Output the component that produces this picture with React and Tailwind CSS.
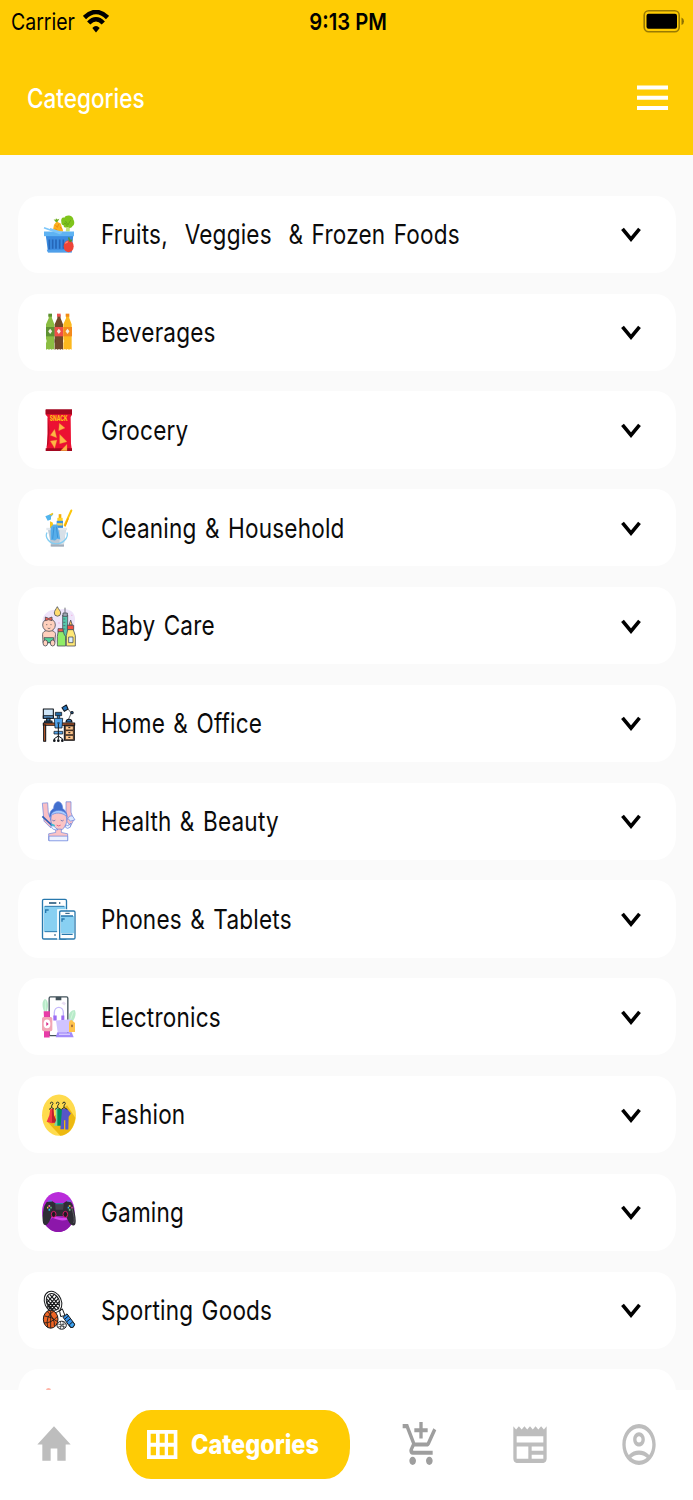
import { MdHome, MdAddShoppingCart, MdNewspaper, MdOutlineAccountCircle } from 'react-icons/md';

function Basket() {
    return (
        <svg viewBox="93 70.5 105 126" className="w-[35px] h-[42px] shrink-0">
            <path d="M128 126l4-20 8-10 12 6 8 24z" fill="#fbb01f" />
            <path d="M136 108l6 4M146 104l-4 10M150 112l6 8M134 118l8 4" stroke="#ef8a12" strokeWidth="3" />
            <path d="M138 98l-7-8 6 1 1-5 4 4 6-2-5 9z" fill="#6fae22" />
            <path d="M167 126l3-20 10 2-1 18z" fill="#c3e27a" />
            <path d="M154 98c-2-9 3-16 9-13 5-12 27-7 27 5 5 8 3 18-3 20-2 6-10 7-13 2-7 5-14 1-13-5-5 0-7-4-7-9z" fill="#7fc41c" />
            <path d="M166 94l8 12 8-14M160 106l5-6 8 12" stroke="#5c9e14" strokeWidth="2" fill="none" />
            <path d="M107 134h83l-5 54h-71z" fill="#3b8be0" />
            <path d="M102 126h90v14h-90z" fill="#5fb3f3" />
            <path d="M102 115l50 18M120 118l36 12" stroke="#7cc6fa" strokeWidth="5" />
            <path d="M118 150v30M128 150v28M138 150v28M149 150v28M160 150v28" stroke="#2566b8" strokeWidth="5" />
            <path d="M110 181h76l-1 8h-71z" fill="#4f9fea" />
            <ellipse cx="176" cy="170" rx="15" ry="18" fill="#ee4438" />
            <path d="M166 162q4-6 8-4" stroke="#ff8b78" strokeWidth="4" fill="none" />
            <path d="M177 156l-3-12 4-1 2 7 8 1-6 7z" fill="#53922a" />
        </svg>
    );
}

function Bottle({ x, body, dark, cap, label }) {
    return (
        <g transform={`translate(${x} 0)`}>
            <path d="M9 376h9l1 10 7 18v76l-4-2-4 2-4-2-4 2-4-2-5 2v-76l8-18z" fill={body} />
            <path d="M8 372h11v9H8z" fill={cap} />
            <path d="M1 412h26v28H1z" fill={label} />
            <path d="M13.500 417l6 8-6 8-6-8z" fill="#f4eee2" />
            <path d="M1 447l3 7-3 7z" fill={dark} />
        </g>
    );
}

function Bottles() {
    return (
        <svg viewBox="93 364 105 126" className="w-[35px] h-[42px] shrink-0">
            <Bottle x={107} body="#8bbd42" dark="#d9ebbd" cap="#5d9031" label="#5e9132" />
            <Bottle x={133} body="#70492a" dark="#53341d" cap="#ef5350" label="#ef4f48" />
            <Bottle x={159} body="#fcb81e" dark="#fff0c2" cap="#f28a16" label="#f38a1d" />
        </svg>
    );
}

function Snack() {
    return (
        <svg viewBox="93 72 105 126" className="w-[35px] h-[42px] shrink-0">
            <path d="M107 75h79v14l-4 7 1 80 3 21h-78l4-21 1-80-6-7z" fill="#ec1032" />
            <path d="M107 73h79v15h-79zM107 190h79v8h-79z" fill="#a30720" />
            <path d="M113 94l5 40-3 44-5 8 4-40z" fill="#b90a26" />
            <text x="146" y="109" textAnchor="middle" textLength="53" lengthAdjust="spacingAndGlyphs" fontSize="21" fontWeight="800" fontFamily="Inter, sans-serif" fill="#ffc114">SNACK</text>
            <g fill="#ffb545" stroke="#e08a2a" strokeWidth="1">
                <path d="M148 115l17 14-19 8z" />
                <path d="M134 133l6 25-19-7z" />
                <path d="M149 148l22 22-22 6z" />
                <path d="M121 168l20-3-7 25z" />
                <path d="M171 178v19h-19z" />
            </g>
        </svg>
    );
}

function Cleaning() {
    return (
        <svg viewBox="93 365.5 105 126" className="w-[35px] h-[42px] shrink-0">
            <path d="M184 376l-20 44" stroke="#fbc60b" strokeWidth="6" strokeLinecap="round" />
            <path d="M175 399l-10 25" stroke="#f7a600" strokeWidth="4" />
            <path d="M106 393l13-5 8-3 3 3-7 7v8l-10 4z" fill="#52b5ed" />
            <path d="M118 388l10-5 2 3-6 6z" fill="#f5c81d" />
            <path d="M120 408l8 4 4 18h-12z" fill="#f8c51b" />
            <path d="M146 387h8v14h-8z" fill="#f6ae09" />
            <path d="M142 398h16v12h-16z" fill="#ffd429" />
            <path d="M140 407h19v23h-19z" fill="#3b91dd" />
            <path d="M141 414h17v7h-17z" fill="#f6d554" />
            <path d="M113 430h55l-7 54h-37z" fill="#bcc8d5" />
            <path d="M150 432h17l-6 52h-13z" fill="#d7e0e8" />
            <path d="M109 428h62v7h-62z" fill="#e1e7ed" />
            <path d="M122 426l8-8h12l9 45-9-2-7 5-13-2z" fill="#57aeea" />
            <path d="M132 425l-4 36M139 424l4 34" stroke="#2f86ce" strokeWidth="2" />
            <path d="M111 442c-8 15 8 34 27 34s39-18 33-34" stroke="#83cdf2" strokeWidth="4" fill="none" />
            <path d="M122 478h40v6h-40z" fill="#a3aebb" />
        </svg>
    );
}

function Baby() {
    return (
        <svg viewBox="93 74 105 126" className="w-[35px] h-[42px] shrink-0">
            <path d="M98 130c-5-30 25-47 46-40 25-12 58 2 50 36l-6 60h-80z" fill="#eee4fa" />
            <g stroke="#494d55" strokeWidth="2.400" strokeLinejoin="round">
                <path d="M142 79c-5 9-9 13-9 19a9 9 0 0 0 19 0c0-6-6-10-10-19z" fill="#ffdc72" />
                <path d="M98 167c-2-12 6-17 19-17s22 5 19 17l-2 20H99z" fill="#ffd0bd" />
                <path d="M102 172h29l-2 15h-24z" fill="#4fd39a" />
                <ellipse cx="106" cy="188" rx="7" ry="9" fill="#ffd0bd" />
                <ellipse cx="128" cy="188" rx="7" ry="9" fill="#ffd0bd" />
                <ellipse cx="117" cy="134" rx="19" ry="19" fill="#ffd0bd" />
                <path d="M106 110l10 4 10-4v11l-10-3-10 3z" fill="#f45b50" />
                <path d="M165 82v22" fill="none" />
                <path d="M158 104h15v74h-15z" fill="#55c8ad" />
                <path d="M159 98h13v10h-13z" fill="#9fa8b4" />
                <path d="M145 151h15l2 10 5 8v28h-25v-28z" fill="#8fec67" />
                <path d="M144 145h15v9h-15z" fill="#f4594a" />
                <path d="M177 134l5-15 5 15z" fill="#ffc15a" />
                <path d="M172 135h19v13h-19z" fill="#f65042" />
                <path d="M173 148h17l6 18v31h-27v-31z" fill="#ffe875" />
                <path d="M176 170h13v17h-13z" fill="#dcefff" />
            </g>
            <path d="M108 133h4M121 133h4M113 143q4 4 8 0M160 116h6M160 126h6M160 136h6M160 146h6" stroke="#494d55" strokeWidth="2" fill="none" />
            <path d="M147 126v4M184 105h3" stroke="#f5a0d4" strokeWidth="3" />
        </svg>
    );
}

function Office() {
    return (
        <svg viewBox="93 367 105 126" className="w-[35px] h-[42px] shrink-0">
            <g stroke="#10141a" strokeWidth="3.200" strokeLinejoin="round">
                <path d="M100 388h30v28h-30z" fill="#cfe6f8" />
                <path d="M100 408h30v8h-30z" fill="#5f9fd8" />
                <path d="M110 416h10v9h-10zM104 424h22v6h-22z" fill="#3776ab" />
                <path d="M184 400l-12-14M184 400l-9 20" fill="none" strokeWidth="2" />
                <path d="M156 384l13-8 5 12-11 7z" fill="#2474bd" />
                <circle cx="186" cy="399" r="3.500" fill="#2474bd" />
                <path d="M168 427q1-8 9-8t9 8z" fill="#2474bd" />
                <path d="M100 430h94v7h-94z" fill="#d5652c" />
                <path d="M101 436h6v49h-6z" fill="#d5652c" />
                <path d="M163 437h30v45h-30z" fill="#d77739" />
            </g>
            <g stroke="#10141a" strokeWidth="2.200" strokeLinejoin="round">
                <path d="M166 439h24v12h-24zM166 453h24v12h-24zM166 467h24v13h-24z" fill="#ffc58b" />
                <path d="M136 398h19v10h-19z" fill="#20659f" />
                <path d="M142 408h7v9h-7z" fill="#3682c2" />
                <path d="M133 416h25l-2 29h-21z" fill="#52a4ec" />
                <path d="M132 455h26v8h-26z" fill="#52a4ec" />
            </g>
            <path d="M145 432v47M145 469l-12 8v6M145 469l12 8v6" stroke="#10141a" strokeWidth="3" fill="none" />
            <path d="M175 444h6M175 459h6M175 473h6M142 430h7" stroke="#10141a" strokeWidth="3" />
            <g fill="#10141a">
                <circle cx="133" cy="483" r="4" />
                <circle cx="145" cy="483" r="4" />
                <circle cx="157" cy="483" r="4" />
            </g>
        </svg>
    );
}

function Beauty() {
    return (
        <svg viewBox="93 75.6 105 126" className="w-[35px] h-[42px] shrink-0">
            <path d="M113 101h13l-8 42 12 22h30l13-20-8-43h12" fill="#dce9ff" />
            <g stroke="#6381dc" strokeWidth="2" strokeLinejoin="round">
                <path d="M97 85l16-1 2 31 9 24-2 20-20-20z" fill="#f9bfc5" />
                <path d="M168 81h15v31l8 24-10 19-10-15-3-20z" fill="#f9bfc5" />
                <path d="M131 101c0-27 27-27 27 0 10 8 15 19 13 27l-52-2c-2-9 3-20 12-25z" fill="#416fce" />
                <path d="M124 118c5-14 37-16 45 0l3 16-51 1z" fill="#a8cdff" />
                <path d="M124 123c8-12 36-10 45 2 5 21-7 42-23 42-16 0-27-22-22-44z" fill="#fbc4c5" />
                <path d="M137 163h17v10l19 4v20h-57v-20l21-4z" fill="#fbc4c5" />
                <path d="M117 184h56v14h-56z" fill="#ecf2ff" />
                <path d="M97 125l29 27" stroke="#315eb7" strokeWidth="5" />
                <path d="M129 152l15 13q-16 2-20-9z" fill="#f1f7ff" />
                <path d="M174 131q3-10 13-8l8 12-14 4z" fill="#dce8ff" />
                <path d="M166 151q9 5 17-6l-2 12q-9 8-15 0z" fill="#e6eeff" />
            </g>
            <path d="M127 136q5 5 9 0M152 136q5 5 9 0" stroke="#495ca8" strokeWidth="2" fill="none" />
            <path d="M140 151q6 5 12 0" stroke="#e86583" strokeWidth="3" fill="none" />
            <path d="M124 148l10 5" stroke="#3abed0" strokeWidth="5" />
        </svg>
    );
}

function Phones() {
    return (
        <svg viewBox="93 369 105 126" className="w-[35px] h-[42px] shrink-0">
            <rect x="97.500" y="373" width="72" height="119" rx="4" fill="#fff" stroke="#2878ad" strokeWidth="4" />
            <path d="M101 394h66v76h-66z" fill="#88d0f2" />
            <path d="M104 394h59M104 470h40" stroke="#2878ad" strokeWidth="3" />
            <path d="M117 384h22M147 384h4M133 480h4" stroke="#174f76" strokeWidth="5" />
            <path d="M107 414v-9h9" stroke="#2878ad" strokeWidth="4" fill="none" />
            <path d="M144 494V405h29" stroke="#fff" strokeWidth="5" fill="none" />
            <rect x="149" y="408" width="46" height="84" rx="4" fill="#fff" stroke="#2878ad" strokeWidth="4" />
            <path d="M152 423h40v52h-40z" fill="#88d0f2" />
            <path d="M153 423h36M155 478h33" stroke="#2878ad" strokeWidth="4" />
            <path d="M166 415h13" stroke="#174f76" strokeWidth="3" />
            <path d="M156 440v-8h8" stroke="#2878ad" strokeWidth="4" fill="none" />
        </svg>
    );
}

function Electronics() {
    return (
        <svg viewBox="93 77.2 105 126" className="w-[35px] h-[42px] shrink-0">
            <path d="M102 123c-8-20-4-34 3-37 10 3 12 21 5 39zM178 150c-5-19 3-30 16-31 6 9 2 25-7 36z" fill="#b8eac9" />
            <path d="M106 91v33M190 124l-9 26" stroke="#e1fae6" strokeWidth="2" />
            <rect x="117.500" y="80" width="56" height="116" rx="4" fill="#fff" stroke="#43535b" strokeWidth="4" />
            <path d="M137 80h17v10h-17z" fill="#43535b" />
            <path d="M154 99l7-5 7 6-5 6z" fill="#eadff4" />
            <path d="M133 141v-14c0-21 27-21 27 0v14" stroke="#c5b9fc" strokeWidth="4" fill="none" />
            <path d="M130 136h10v15h-10zM154 136h9v15h-9z" fill="#9c6df4" />
            <path d="M138 151l45-4 4 39h-44z" fill="#d0c4ff" />
            <path d="M142 186h43l6 15h-54z" fill="#a28bfa" />
            <path d="M147 192h33" stroke="#d9ceff" strokeWidth="4" />
            <path d="M101 123h19l-1 20h-17zM102 181h17v21h-17z" fill="#e83ba7" />
            <rect x="96" y="140" width="31" height="43" rx="5" fill="#f2a6b6" />
            <ellipse cx="111" cy="161" rx="10" ry="13" fill="#fff" />
            <path d="M109 155l7 6-7 6z" fill="#d82282" />
            <path d="M177 160q0-10 8-11l10 9v27h-18z" fill="#ffc34c" />
            <ellipse cx="186" cy="167" rx="3" ry="4" fill="#a46d38" />
        </svg>
    );
}

function Fashion() {
    return (
        <svg viewBox="93 370.6 105 126" className="w-[35px] h-[42px] shrink-0">
            <ellipse cx="147" cy="434" rx="51" ry="62" fill="#ffdb4d" />
            <path d="M171 404l25 38c-4 31-20 52-45 54l-39-42z" fill="#edb911" />
            <path d="M121 415h9l2 20 9 21-16 2-15-4 8-20z" fill="#f23843" />
            <path d="M126 415h4l2 20 9 21h-15z" fill="#b9212d" />
            <path d="M137 415l8-3v54h-13l6-17z" fill="#7cd3a0" />
            <path d="M142 415h11l4 5v46h-15z" fill="#008f58" />
            <path d="M156 415h15l12 14-7 10-1 38h-9v-28h-4v27h-11l4-46z" fill="#5656c7" />
            <g stroke="#26302c" strokeWidth="3" fill="none">
                <path d="M121 400q0-5 4-5t4 4l-4 7v5l-8 6M125 411l7 5" />
                <path d="M139 400q0-5 4-5t4 4l-4 7v5l-8 6M143 411l8 5" />
                <path d="M158 400q0-5 4-5t4 4l-4 7v5l-8 6M162 411l10 6" />
            </g>
        </svg>
    );
}

function Gaming() {
    return (
        <svg viewBox="93 79 105 126" className="w-[35px] h-[42px] shrink-0">
            <ellipse cx="145" cy="142" rx="49" ry="60" fill="#b92bda" />
            <path d="M106 180l25-24 61 6c-10 29-29 40-47 40-16 0-29-8-39-22z" fill="#8c17aa" />
            <path d="M125 153q23 16 48 8" stroke="#d647ee" strokeWidth="7" fill="none" />
            <path d="M110 112l17-2 8 5h26l8-5 14 3 5 7c7 22 14 57 5 62-9 4-18-10-25-27h-43c-6 17-14 29-21 26-11-5-5-42-1-57z" fill="#2e2d35" />
            <path d="M135 115h27l-3 20h-22z" fill="#44434d" />
            <path d="M137 117h22M114 109h12M171 109h11" stroke="#12bce6" strokeWidth="2" />
            <path d="M186 132q10 33 5 43" stroke="#5b5a62" strokeWidth="3" fill="none" />
            <ellipse cx="131" cy="149" rx="7" ry="9" fill="#1c1b21" stroke="#f21670" strokeWidth="2.500" />
            <ellipse cx="166" cy="149" rx="7" ry="9" fill="#1c1b21" stroke="#f21670" strokeWidth="2.500" />
            <path d="M111 129h4M179 122v4" stroke="#f2c63c" strokeWidth="5" />
            <path d="M118 121v6M184 129h4" stroke="#f454ab" strokeWidth="5" />
            <path d="M118 132v6M173 129h4" stroke="#26b8e9" strokeWidth="5" />
            <path d="M121 129h4M179 132v6" stroke="#63cb83" strokeWidth="5" />
        </svg>
    );
}

function Sports() {
    return (
        <svg viewBox="93 372.4 105 126" className="w-[35px] h-[42px] shrink-0">
            <g stroke="#17191b" strokeWidth="3">
                <ellipse cx="129" cy="411" rx="25" ry="33" transform="rotate(-24 129 411)" fill="#fff" />
                <ellipse cx="129" cy="411" rx="19" ry="26" transform="rotate(-24 129 411)" fill="#fff" />
                <path d="M120 389l29 33M113 394l34 39M110 402l29 34M109 412l18 21M134 387l-24 27M141 393l-30 35M146 400l-31 35M149 409l-24 27" strokeWidth="3.500" />
                <path d="M149 439l8-7 8 20-13 3z" fill="#fff" />
                <path d="M159 457l12-10 21 28c4 8-7 17-13 10z" fill="#3490e8" />
                <path d="M165 462l11-9M171 470l11-9" />
                <path d="M178 480l10-9 6 7-4 9-8 1z" fill="#3da3f2" />
                <ellipse cx="122" cy="463" rx="22" ry="27" fill="#ee6424" />
                <path d="M103 453q22 2 39 17M111 439q25 22 22 45M132 438q-27 16-19 49M102 474q21 2 41-20M122 437v52" fill="none" strokeWidth="2.500" />
                <ellipse cx="155" cy="481" rx="14" ry="12" fill="#fff" />
                <path d="M143 477q11 7 25-1M143 487q12-7 24 0M151 471q5 10 0 21M160 470q-3 10 1 21" fill="none" strokeWidth="2" />
            </g>
        </svg>
    );
}

function Pets() {
    return (
        <svg viewBox="0 0 35 42" className="w-[35px] h-[42px] shrink-0">
            <ellipse cx="7.500" cy="3.500" rx="2.500" ry="2.500" fill="#ffb5a8" />
        </svg>
    );
}

const CATEGORIES = [
    { name: 'Fruits,  Veggies  & Frozen Foods', Icon: Basket },
    { name: 'Beverages', Icon: Bottles },
    { name: 'Grocery', Icon: Snack },
    { name: 'Cleaning & Household', Icon: Cleaning },
    { name: 'Baby Care', Icon: Baby },
    { name: 'Home & Office', Icon: Office },
    { name: 'Health & Beauty', Icon: Beauty },
    { name: 'Phones & Tablets', Icon: Phones },
    { name: 'Electronics', Icon: Electronics },
    { name: 'Fashion', Icon: Fashion },
    { name: 'Gaming', Icon: Gaming },
    { name: 'Sporting Goods', Icon: Sports },
    { name: '', Icon: Pets },
];

function StatusBar() {
    return (
        <div className="grid grid-cols-3 items-center h-[43px] pl-[11px] pr-[8px]">
            <div className="flex items-center">
                <span className="w-[72px] text-[23.5px] leading-none origin-left scale-x-[0.83] whitespace-pre">Carrier</span>
                <svg viewBox="0 0 26 23" className="w-[26px] h-[23px]">
                    <path d="M1.500 7.500Q13-3.500 24.500 7.500" fill="none" stroke="#000" strokeWidth="4.500" />
                    <path d="M5.700 13Q13 5.500 20.300 13" fill="none" stroke="#000" strokeWidth="4.500" />
                    <path d="M9.300 18Q13 14 16.700 18L13 22.500z" />
                </svg>
            </div>
            <span className="justify-self-center text-[23.5px] leading-none font-semibold scale-x-[0.86] whitespace-pre">9:13 PM</span>
            <svg viewBox="0 0 42 24" className="w-[42px] h-[24px] justify-self-end mb-[2px]">
                <rect x="1.200" y="1.800" width="35" height="21" rx="4.500" fill="none" stroke="#000" strokeOpacity=".4" strokeWidth="1.600" />
                <rect x="3.500" y="4.700" width="30.500" height="15" rx="2" />
                <path d="M38.500 8.500q2.500 1 2.500 3.700t-2.500 3.700z" fillOpacity=".45" />
            </svg>
        </div>
    );
}

function CategoryRow({ name, Icon }) {
    return (
        <div className="flex items-center shrink-0 h-[77.3px] pl-[23px] pr-[35px] bg-white rounded-[20px/24px]">
            <Icon />
            <span className="ml-[25px] pt-px text-[27.5px] leading-none tracking-[0.25px] [word-spacing:2.2px] text-[#0b0b0b] origin-left scale-x-[0.82] whitespace-pre">{name}</span>
            {name && (
                <svg viewBox="0 0 20 16" className="w-[20px] h-[16px] ml-auto mt-[2px] shrink-0">
                    <path d="M1.500 1.800L10 12.200l8.500-10.400" fill="none" stroke="#000" strokeWidth="3.600" />
                </svg>
            )}
        </div>
    );
}

export default function App() {
    return (
        <div className="flex flex-col w-[693px] h-[1500px] overflow-hidden bg-[#fafafa] font-[Inter,sans-serif]">
            <header className="h-[155px] shrink-0 bg-[#ffcc04]">
                <StatusBar />
                <div className="flex items-center justify-between h-[110px] pl-[27px] pr-[25px]">
                    <h1 className="text-[27px] leading-none font-medium text-white origin-left scale-x-[0.835] whitespace-pre">Categories</h1>
                    <svg viewBox="0 0 31 26" className="w-[31px] h-[26px]">
                        <path d="M0 .5h31v4H0zM0 10.800h31v4H0zM0 21h31v4H0z" fill="#fff" />
                    </svg>
                </div>
            </header>

            <main className="flex-1 min-h-0 overflow-hidden flex flex-col gap-[20.5px] pt-[40.800px] px-[17.500px]">
                {CATEGORIES.map((c, i) => <CategoryRow key={i} {...c} />)}
            </main>

            <nav className="flex items-center shrink-0 h-[110.500px] pl-[33.700px] bg-white text-[#bdbdbd]">
                <MdHome preserveAspectRatio="none" className="w-[40px] h-[49px]" />
                <div className="flex items-center w-[224px] h-[69px] ml-[52px] mr-[51.600px] pl-[21.500px] rounded-[25px/31px] bg-[#ffcc04] text-white">
                    <svg viewBox="0 0 91 87" preserveAspectRatio="none" className="w-[30.400px] h-[29px] shrink-0">
                        <path fillRule="evenodd" fill="#fff" d="M0 0h91v87H0zM11 11v27h16V11zM38 11v27h15V11zM63 11v27h17V11zM11 50v26h16V50zM38 50v26h15V50zM63 50v26h17V50z" />
                    </svg>
                    <span className="ml-[13px] text-[27px] leading-none font-extrabold origin-left scale-x-[0.87] whitespace-pre">Categories</span>
                </div>
                <MdAddShoppingCart preserveAspectRatio="none" className="w-[40px] h-[49px] mr-[69px] text-[#9e9e9e]" />
                <MdNewspaper preserveAspectRatio="none" className="w-[40px] h-[49px] mr-[69px]" />
                <MdOutlineAccountCircle preserveAspectRatio="none" className="w-[40px] h-[49px]" />
            </nav>
        </div>
    );
}
